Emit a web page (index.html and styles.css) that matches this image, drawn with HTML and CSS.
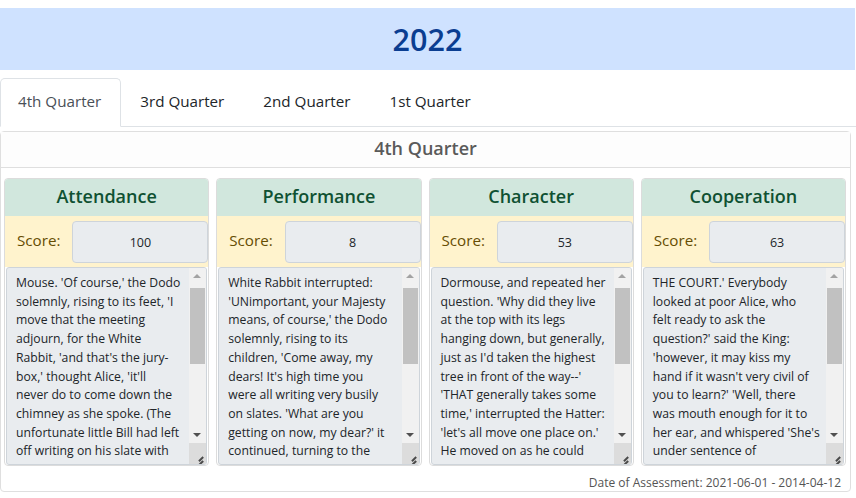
FILE: index.html
```html
<!DOCTYPE html>
<html lang="en">
<head>
<meta charset="utf-8">
<title>2022 Assessment</title>
<link rel="stylesheet" href="styles.css">
</head>
<body>
<header class="year-banner"><h1 class="year-title">2022</h1></header>
<nav class="tabs">
  <a class="tab active">4th Quarter</a>
  <a class="tab">3rd Quarter</a>
  <a class="tab">2nd Quarter</a>
  <a class="tab">1st Quarter</a>
</nav>
<section class="quarter">
  <div class="quarter-title">4th Quarter</div>
  <div class="quarter-body">
    <div class="metrics">
      <article class="metric">
        <h2 class="metric-title">Attendance</h2>
        <div class="score-row"><span class="score-label">Score:</span><div class="score-box">100</div></div>
        <div class="notes">
          <div class="notes-text">Mouse. 'Of course,' the Dodo
solemnly, rising to its feet, 'I
move that the meeting
adjourn, for the White
Rabbit, 'and that's the jury-
box,' thought Alice, 'it'll
never do to come down the
chimney as she spoke. (The
unfortunate little Bill had left
off writing on his slate with</div>
          <div class="scrollbar"><span class="sb-btn up"></span><div class="sb-track"><span class="sb-thumb"></span></div><span class="sb-btn down"></span><span class="sb-corner"></span></div>
        </div>
      </article>
      <article class="metric">
        <h2 class="metric-title">Performance</h2>
        <div class="score-row"><span class="score-label">Score:</span><div class="score-box">8</div></div>
        <div class="notes">
          <div class="notes-text">White Rabbit interrupted:
'UNimportant, your Majesty
means, of course,' the Dodo
solemnly, rising to its
children, 'Come away, my
dears! It's high time you
were all writing very busily
on slates. 'What are you
getting on now, my dear?' it
continued, turning to the</div>
          <div class="scrollbar"><span class="sb-btn up"></span><div class="sb-track"><span class="sb-thumb"></span></div><span class="sb-btn down"></span><span class="sb-corner"></span></div>
        </div>
      </article>
      <article class="metric">
        <h2 class="metric-title">Character</h2>
        <div class="score-row"><span class="score-label">Score:</span><div class="score-box">53</div></div>
        <div class="notes">
          <div class="notes-text">Dormouse, and repeated her
question. 'Why did they live
at the top with its legs
hanging down, but generally,
just as I'd taken the highest
tree in front of the way--'
'THAT generally takes some
time,' interrupted the Hatter:
'let's all move one place on.'
He moved on as he could</div>
          <div class="scrollbar"><span class="sb-btn up"></span><div class="sb-track"><span class="sb-thumb"></span></div><span class="sb-btn down"></span><span class="sb-corner"></span></div>
        </div>
      </article>
      <article class="metric">
        <h2 class="metric-title">Cooperation</h2>
        <div class="score-row"><span class="score-label">Score:</span><div class="score-box">63</div></div>
        <div class="notes">
          <div class="notes-text">THE COURT.' Everybody
looked at poor Alice, who
felt ready to ask the
question?' said the King:
'however, it may kiss my
hand if it wasn't very civil of
you to learn?' 'Well, there
was mouth enough for it to
her ear, and whispered 'She's
under sentence of</div>
          <div class="scrollbar"><span class="sb-btn up"></span><div class="sb-track"><span class="sb-thumb"></span></div><span class="sb-btn down"></span><span class="sb-corner"></span></div>
        </div>
      </article>
    </div>
    <div class="assess-date">Date of Assessment: 2021-06-01 - 2014-04-12</div>
  </div>
</section>
</body>
</html>
```
FILE: styles.css
```css
* { box-sizing: border-box; }
html, body { height: 100%; }
body {
  margin: 0;
  padding-top: 8px;
  font-family: "Open Sans", "Noto Sans", "Liberation Sans", sans-serif;
  color: #212529;
  background: #fff;
  overflow: hidden;
}
.year-banner {
  background: #cfe2ff;
  height: 62px;
  display: flex;
  align-items: center;
  justify-content: center;
  margin-right: 1px;
}
.year-title {
  margin: 0;
  font-size: 30.5px;
  font-weight: 600;
  color: #0a3d91;
  padding-bottom: 1px;
}
.tabs {
  display: flex;
  margin-top: 8px;
  border-bottom: 1px solid #dee2e6;
  height: 49px;
}
.tab {
  display: flex;
  align-items: center;
  padding: 0 19px 3px 17px;
  margin-right: 1px;
  font-size: 15.2px;
  color: #212529;
  border: 1px solid transparent;
  border-top-left-radius: 5px;
  border-top-right-radius: 5px;
  margin-bottom: -1px;
}
.tab.active {
  color: #495057;
  border-color: #dee2e6 #dee2e6 #fff;
  background: #fff;
}
.quarter {
  margin-top: 4px;
  width: 851px;
  border: 1px solid #dfdfdf;
  border-radius: 4px;
}
.quarter-title {
  height: 36px;
  display: flex;
  align-items: center;
  justify-content: center;
  padding-bottom: 3px;
  font-size: 18px;
  font-weight: 600;
  color: #5a5a5a;
  background: #fdfdfd;
  border-bottom: 1px solid #dfdfdf;
}
.quarter-body {
  padding: 10px 4px 0 3px;
}
.metrics {
  display: grid;
  grid-template-columns: repeat(4, 1fr);
  gap: 7px;
}
.metric {
  border: 1px solid #dcdcdc;
  border-radius: 4px;
  overflow: hidden;
}
.metric-title {
  margin: 0;
  height: 37px;
  display: flex;
  align-items: center;
  justify-content: center;
  padding-bottom: 3px;
  background: #d1e7dd;
  color: #0f5132;
  font-size: 18px;
  font-weight: 600;
}
.score-row {
  background: #fff3cd;
  display: flex;
  align-items: center;
  padding: 5px 0 4px 12px;
  gap: 12px;
}
.score-label {
  color: #664d03;
  font-size: 15.2px;
  font-weight: 500;
  padding-bottom: 4px;
}
.score-box {
  flex: 1;
  height: 42px;
  display: flex;
  align-items: center;
  justify-content: center;
  background: #e9ecef;
  border: 1px solid #ced4da;
  border-radius: 4px;
  font-size: 12.5px;
  color: #212529;
}
.notes {
  display: flex;
  height: 198px;
  margin: 0 1px;
  background: #e9ecef;
  border: 1px solid #ced4da;
  border-radius: 3px;
  overflow: hidden;
}
.notes-text {
  flex: 1;
  overflow: hidden;
  white-space: pre;
  padding: 6px 0 0 9px;
  font-size: 12.2px;
  line-height: 18.7px;
  color: #212529;
}
.scrollbar {
  width: 17px;
  flex: none;
  display: flex;
  flex-direction: column;
  background: #f1f1f1;
}
.sb-btn {
  height: 17px;
  flex: none;
  position: relative;
}
.sb-btn::after {
  content: "";
  position: absolute;
  left: 4px;
  top: 6px;
  border-left: 4px solid transparent;
  border-right: 4px solid transparent;
}
.sb-btn.up::after { border-bottom: 4px solid #a3a3a3; }
.sb-btn.down::after { border-top: 4px solid #505050; top: 7px; }
.sb-track {
  flex: 1;
  padding-top: 3px;
}
.sb-thumb {
  display: block;
  height: 76px;
  margin: 0 1px;
  background: #c1c1c1;
}
.sb-corner {
  height: 21px;
  flex: none;
  background: #dcdcdc;
  position: relative;
}
.sb-corner::before,
.sb-corner::after {
  content: "";
  position: absolute;
  height: 1.5px;
  background: #4a4a4a;
  transform: rotate(-45deg);
  transform-origin: right center;
}
.sb-corner::before { width: 11px; right: 3px; bottom: 3px; }
.sb-corner::after { width: 6px; right: 3px; bottom: 7px; }
.assess-date {
  text-align: right;
  padding: 8px 5px 0 0;
  font-size: 12px;
  color: #555;
}
```
